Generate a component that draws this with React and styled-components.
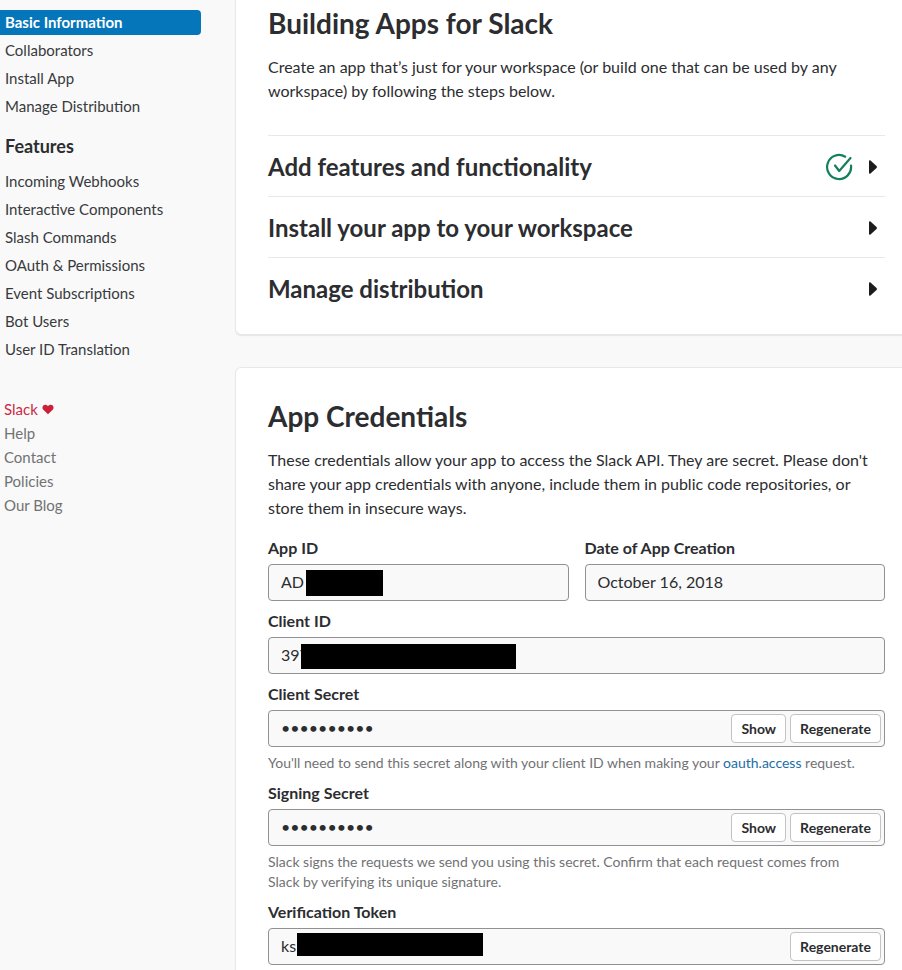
import React, { useId } from "react";
import styled, { createGlobalStyle } from "styled-components";

const GlobalStyle = createGlobalStyle`
  *, *::before, *::after { box-sizing: border-box; }
  body {
    margin: 0;
    background: #f9f9f9;
    color: #2c2d30;
    font-family: Lato, "Liberation Sans", sans-serif;
    font-size: 16px;
    line-height: 24px;
  }
  button, input { font: inherit; color: inherit; }
`;

const Page = styled.div`
  display: flex;
  align-items: flex-start;
`;

const Sidebar = styled.aside`
  flex: none;
  width: 201px;
  margin-right: 34px;
  padding-top: 10px;
  font-size: 15px;
`;

const NavList = styled.ul`
  display: grid;
  gap: 3px;
  margin: 0;
  padding: 0;
  list-style: none;
`;

const NavLink = styled.a`
  display: block;
  padding: 0 5px;
  line-height: 25px;
  border-radius: 0 4px 4px 0;
  text-decoration: none;
  color: ${(p) => (p.$active ? "#fff" : "#383a3d")};
  background: ${(p) => (p.$active ? "#0576b9" : "transparent")};
  font-weight: ${(p) => (p.$active ? 700 : 400)};
`;

const NavHeading = styled.h2`
  margin: 15px 0 11px;
  padding: 0 5px;
  font-size: 18px;
  line-height: 24px;
  font-weight: 700;
`;

const FooterLinks = styled.nav`
  display: flex;
  flex-direction: column;
  align-items: flex-start;
  margin-top: 35px;
  padding-left: 4px;
`;

const FooterLink = styled.a`
  display: inline-flex;
  align-items: center;
  gap: 4px;
  line-height: 24px;
  text-decoration: none;
  color: ${(p) => (p.$brand ? "#cb2845" : "#717274")};
`;

const Main = styled.main`
  flex: 1;
  min-width: 0;
  display: grid;
  gap: 32px;
`;

const Card = styled.section`
  padding: 32px 17px 32px 32px;
  background: #fff;
  border: 1px solid #e8e8e8;
  border-right: 0;
  border-radius: 6px 0 0 6px;
  box-shadow: 0 1px 1px rgba(0, 0, 0, 0.08);
`;

const LeadCard = styled(Card)`
  padding-top: 7px;
  padding-bottom: 16px;
  border-top: 0;
  border-radius: 0 0 0 6px;
`;

const Title = styled.h1`
  margin: 0 0 16px;
  font-size: 28px;
  line-height: 32px;
  font-weight: 700;
`;

const Text = styled.p`
  margin: 0;
`;

const Steps = styled.div`
  margin-top: 32px;
`;

const Step = styled.button`
  display: flex;
  align-items: center;
  gap: 16px;
  width: 100%;
  height: 61px;
  padding: 2px 8px 0 0;
  border: 0;
  border-top: 1px solid #e8e8e8;
  background: none;
  font-size: 24px;
  font-weight: 700;
  text-align: left;
`;

const StepName = styled.span`
  flex: 1;
`;

const FieldRow = styled.div`
  display: grid;
  grid-template-columns: 1fr 1fr;
  gap: 16px;
`;

const Fields = styled.div`
  display: grid;
  gap: 8px;
  margin-top: 16px;
`;

const Label = styled.label`
  display: block;
  margin-bottom: 4px;
  font-weight: 700;
`;

const Box = styled.div`
  position: relative;
  display: flex;
  align-items: center;
  gap: 4px;
  height: 37px;
  padding: 0 3px 0 0;
  background: #f9f9f9;
  border: 1px solid #919193;
  border-radius: 4px;
`;

const Input = styled.input`
  flex: 1;
  min-width: 0;
  height: 100%;
  padding: 0 12px 2px;
  border: 0;
  outline: 0;
  background: transparent;
`;

const Redaction = styled.span`
  position: absolute;
  top: ${(p) => p.$top}px;
  left: ${(p) => p.$left}px;
  width: ${(p) => p.$width}px;
  height: ${(p) => p.$height}px;
  background: #000;
`;

const SmallButton = styled.button`
  height: 29px;
  padding: 0 9px;
  background: #fff;
  border: 1px solid #c3c3c5;
  border-radius: 4px;
  font-size: 14px;
  font-weight: 700;
`;

const Hint = styled.p`
  margin: 6px 0 0;
  padding-right: 16px;
  color: #717274;
  font-size: 14px;
  line-height: 20px;
`;

const TextLink = styled.a`
  color: #1c6ea4;
  text-decoration: none;
`;

function Heart() {
  return (
    <svg width="12" height="11" viewBox="0 0 12 11" aria-hidden="true">
      <path
        fill="#cb2038"
        d="M6 10.2 1.1 5.6C.2 4.7.2 2.5 1.3 1.5 2.6.3 4.9.5 6 2.3 7.1.5 9.4.3 10.7 1.5c1.1 1 1.1 3.2.2 4.1z"
      />
    </svg>
  );
}

function CheckCircle() {
  return (
    <svg
      width="28"
      height="28"
      viewBox="0 0 28 28"
      fill="none"
      stroke="#14805a"
      strokeWidth="2.2"
      strokeLinecap="round"
      strokeLinejoin="round"
      role="img"
      aria-label="Completed"
    >
      <path d="M20.2 3.7A12 12 0 1 0 26 12.5" />
      <path d="m10 12.500 4.200 5.500L25.500 5" />
    </svg>
  );
}

function Caret() {
  return (
    <svg width="8" height="14" viewBox="0 0 8 14" aria-hidden="true">
      <path
        fill="#1d1c1d"
        d="M0 1.2C0 .3.8 0 1.5.6l6 5.4c.6.6.6 1.4 0 2l-6 5.4C.8 14 0 13.700 0 12.800z"
      />
    </svg>
  );
}

function Field({ label, redaction, actions = [], hint, ...input }) {
  const id = useId();
  return (
    <div>
      <Label htmlFor={id}>{label}</Label>
      <Box>
        <Input id={id} readOnly {...input} />
        {redaction && (
          <Redaction
            $left={redaction.left}
            $top={redaction.top}
            $width={redaction.width}
            $height={redaction.height}
          />
        )}
        {actions.map((action) => (
          <SmallButton key={action} type="button">
            {action}
          </SmallButton>
        ))}
      </Box>
      {hint && <Hint>{hint}</Hint>}
    </div>
  );
}

const settings = ["Basic Information", "Collaborators", "Install App", "Manage Distribution"];
const features = [
  "Incoming Webhooks",
  "Interactive Components",
  "Slash Commands",
  "OAuth & Permissions",
  "Event Subscriptions",
  "Bot Users",
  "User ID Translation",
];
const steps = [
  { name: "Add features and functionality", done: true },
  { name: "Install your app to your workspace" },
  { name: "Manage distribution" },
];

function Nav({ items, active }) {
  return (
    <NavList>
      {items.map((item) => (
        <li key={item}>
          <NavLink href="#" $active={item === active}>
            {item}
          </NavLink>
        </li>
      ))}
    </NavList>
  );
}

export default function App() {
  return (
    <>
      <GlobalStyle />
      <Page>
        <Sidebar>
          <Nav items={settings} active="Basic Information" />
          <NavHeading>Features</NavHeading>
          <Nav items={features} />
          <FooterLinks>
            <FooterLink href="#" $brand>
              Slack <Heart />
            </FooterLink>
            {["Help", "Contact", "Policies", "Our Blog"].map((item) => (
              <FooterLink key={item} href="#">
                {item}
              </FooterLink>
            ))}
          </FooterLinks>
        </Sidebar>
        <Main>
          <LeadCard>
            <Title>Building Apps for Slack</Title>
            <Text>
              Create an app that’s just for your workspace (or build one that can be used by any
              workspace) by following the steps below.
            </Text>
            <Steps>
              {steps.map((step) => (
                <Step key={step.name} type="button">
                  <StepName>{step.name}</StepName>
                  {step.done && <CheckCircle />}
                  <Caret />
                </Step>
              ))}
            </Steps>
          </LeadCard>
          <Card>
            <Title as="h2">App Credentials</Title>
            <Text>
              These credentials allow your app to access the Slack API. They are secret. Please
              don't share your app credentials with anyone, include them in public code
              repositories, or store them in insecure ways.
            </Text>
            <Fields>
              <FieldRow>
                <Field
                  label="App ID"
                  value="AD"
                  redaction={{ left: 37, top: 5, width: 77, height: 26 }}
                />
                <Field label="Date of App Creation" value="October 16, 2018" />
              </FieldRow>
              <Field
                label="Client ID"
                value="397"
                redaction={{ left: 32, top: 6, width: 215, height: 25 }}
              />
              <Field
                label="Client Secret"
                type="password"
                value="0000000000"
                actions={["Show", "Regenerate"]}
                hint={
                  <>
                    You'll need to send this secret along with your client ID when making your{" "}
                    <TextLink href="#">oauth.access</TextLink> request.
                  </>
                }
              />
              <Field
                label="Signing Secret"
                type="password"
                value="0000000000"
                actions={["Show", "Regenerate"]}
                hint="Slack signs the requests we send you using this secret. Confirm that each request comes from Slack by verifying its unique signature."
              />
              <Field
                label="Verification Token"
                value="ks"
                redaction={{ left: 28, top: 4, width: 186, height: 23 }}
                actions={["Regenerate"]}
              />
            </Fields>
          </Card>
        </Main>
      </Page>
    </>
  );
}
